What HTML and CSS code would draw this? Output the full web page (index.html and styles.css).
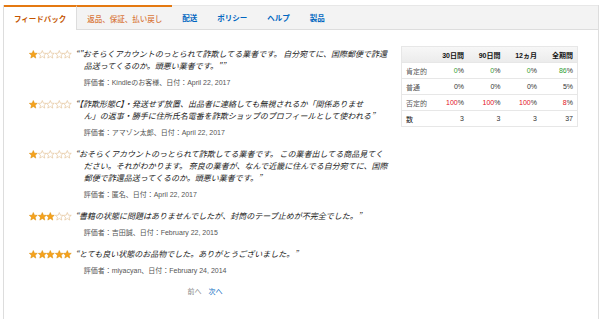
FILE: index.html
```html
<!DOCTYPE html>
<html lang="ja">
<head>
    <meta charset="UTF-8">
    <title>フィードバック</title>
    <link rel="stylesheet" href="styles.css">
</head>
<body>
    <div class="panel">
        <div class="tabs">
            <div class="tab active">フィードバック</div>
            <div class="tab hover">返品、保証、払い戻し</div>
            <div class="tab">配送</div>
            <div class="tab">ポリシー</div>
            <div class="tab">ヘルプ</div>
            <div class="tab">製品</div>
        </div>

        <div class="content">
            <div class="reviews">
                <div class="review">
                    <div class="stars" data-rating="1"></div>
                    <div class="review-body">
                        <p class="review-text">“"おそらくアカウントのっとられて詐欺してる業者です。 自分宛てに、国際郵便で詐還品送ってくるのか。頭悪い業者です。"”</p>
                        <p class="review-meta">評価者：Kindleのお客様、日付：April 22, 2017</p>
                    </div>
                </div>

                <div class="review">
                    <div class="stars" data-rating="1"></div>
                    <div class="review-body">
                        <p class="review-text">“【詐欺形態C】・発送せず放置、出品者に連絡しても無視されるか「関係ありませ<br>ん」の返事・勝手に住所氏名電番を詐欺ショップのプロフィールとして使われる”</p>
                        <p class="review-meta">評価者：アマゾン太郎、日付：April 22, 2017</p>
                    </div>
                </div>

                <div class="review">
                    <div class="stars" data-rating="1"></div>
                    <div class="review-body">
                        <p class="review-text">“おそらくアカウントのっとられて詐欺してる業者です。 この業者出してる商品見てく<br>ださい。それがわかります。 奈良の業者が、なんで近畿に住んでる自分宛てに、国際<br>郵便で詐還品送ってくるのか。頭悪い業者です。”</p>
                        <p class="review-meta">評価者：匿名、日付：April 22, 2017</p>
                    </div>
                </div>

                <div class="review">
                    <div class="stars" data-rating="3"></div>
                    <div class="review-body">
                        <p class="review-text">“書籍の状態に問題はありませんでしたが、封筒のテープ止めが不完全でした。”</p>
                        <p class="review-meta">評価者：吉田誠、日付：February 22, 2015</p>
                    </div>
                </div>

                <div class="review">
                    <div class="stars" data-rating="5"></div>
                    <div class="review-body">
                        <p class="review-text">“とても良い状態のお品物でした。ありがとうございました。”</p>
                        <p class="review-meta">評価者：miyacyan、日付：February 24, 2014</p>
                    </div>
                </div>

                <div class="pager">
                    <span class="pager-prev">前へ</span>
                    <a href="#" class="pager-next">次へ</a>
                </div>
            </div>

            <table class="summary">
                <thead>
                    <tr>
                        <th></th>
                        <th>30日間</th>
                        <th>90日間</th>
                        <th>12ヵ月</th>
                        <th>全期間</th>
                    </tr>
                </thead>
                <tbody>
                    <tr>
                        <td>肯定的</td>
                        <td><span class="pos">0</span>%</td>
                        <td><span class="pos">0</span>%</td>
                        <td><span class="pos">0</span>%</td>
                        <td><span class="pos">86</span>%</td>
                    </tr>
                    <tr>
                        <td>普通</td>
                        <td>0%</td>
                        <td>0%</td>
                        <td>0%</td>
                        <td>5%</td>
                    </tr>
                    <tr>
                        <td>否定的</td>
                        <td><span class="neg">100</span>%</td>
                        <td><span class="neg">100</span>%</td>
                        <td><span class="neg">100</span>%</td>
                        <td><span class="neg">8</span>%</td>
                    </tr>
                    <tr>
                        <td>数</td>
                        <td>3</td>
                        <td>3</td>
                        <td>3</td>
                        <td>37</td>
                    </tr>
                </tbody>
            </table>
        </div>
    </div>

    <script>
        // draw the star rows from data-rating
        const STAR = 'M5 0.6 L6.3 3.7 L9.6 3.9 L7.1 6.1 L7.9 9.4 L5 7.6 L2.1 9.4 L2.9 6.1 L0.4 3.9 L3.7 3.7 Z';

        document.querySelectorAll('.stars').forEach(el => {
            const rating = parseInt(el.dataset.rating, 10);
            let html = '';
            for (let i = 0; i < 5; i++) {
                const cls = i < rating ? 'star full' : 'star empty';
                html += `<svg class="${cls}" viewBox="0 0 10 10"><path d="${STAR}"/></svg>`;
            }
            el.innerHTML = html;
        });
    </script>
</body>
</html>
```

FILE: styles.css
```css
* {
    margin: 0;
    padding: 0;
    box-sizing: border-box;
}

:root {
    --border-color: #dddddd;
    --link-color: #0066c0;
    --orange: #e47911;
    --text-color: #111111;
    --muted-color: #555555;
}

body {
    background: #ffffff;
    font-family: "Liberation Sans", "Noto Sans CJK JP", sans-serif;
    color: var(--text-color);
}

.panel {
    margin: 5px 1px 0 3px;
    min-height: 314px;
    border-left: 1px solid var(--border-color);
    border-right: 1px solid var(--border-color);
}

/* tabs */

.tabs {
    display: flex;
    align-items: flex-start;
    height: 25px;
    background: #f3f3f3;
    border-top: 1px solid #e7e7e7;
    border-bottom: 1px solid var(--border-color);
}

.tab {
    height: 24px;
    margin-top: -1px;
    padding: 0 10px;
    display: flex;
    align-items: center;
    font-family: "Noto Sans CJK JP", sans-serif;
    font-size: 7.5px;
    font-weight: 700;
    color: var(--link-color);
    border-top: 1px solid #e7e7e7;
}

.tab.active {
    height: 25px;
    background: #ffffff;
    color: #c45500;
    border-top: 2px solid var(--orange);
}

.tab.hover {
    color: #d9783c;
    border-top: 2px solid var(--orange);
    border-left: 1px solid var(--border-color);
    font-weight: 500;
}

/* content */

.content {
    display: flex;
    align-items: flex-start;
    padding: 16px 20px 0 25px;
}

.reviews {
    width: 364px;
    padding-top: 2px;
}

.review {
    display: flex;
    align-items: flex-start;
    margin-bottom: 10px;
}

.stars {
    display: flex;
    width: 54px;
    padding-top: 2px;
}

.star {
    width: 8.6px;
    height: 8.6px;
}

.star.full path {
    fill: #f7a21b;
    stroke: #d98a00;
    stroke-width: 0.6;
}

.star.empty path {
    fill: #ffffff;
    stroke: #dcb27a;
    stroke-width: 0.6;
}

.review-body {
    width: 312px;
    padding-left: 1px;
}

.review-text {
    font-family: "Noto Sans CJK JP", serif;
    font-style: italic;
    font-size: 8px;
    line-height: 12px;
    color: #222222;
    text-indent: -8.5px;
}

.review-meta {
    margin-top: 6px;
    font-size: 7px;
    line-height: 10px;
    color: var(--muted-color);
}

.pager {
    display: flex;
    justify-content: center;
    gap: 7px;
    margin-top: 10px;
    padding-right: 12px;
    font-family: "Noto Sans CJK JP", sans-serif;
    font-size: 7px;
    line-height: 10px;
}

.pager-prev {
    color: #888888;
}

.pager-next {
    color: var(--link-color);
    text-decoration: none;
}

/* summary table */

.summary {
    margin-left: 8px;
    width: 177px;
    table-layout: fixed;
    border-collapse: collapse;
    border: 1px solid #e7e7e7;
    font-size: 7px;
    color: #333333;
}

.summary th,
.summary td {
    height: 16px;
    padding: 0 4px;
    text-align: right;
    border-bottom: 1px solid #e7e7e7;
}

.summary th:first-child,
.summary td:first-child {
    width: 30px;
    text-align: left;
    color: var(--muted-color);
}

.summary thead tr {
    background: linear-gradient(#f7f7f7, #ebebeb);
}

.summary th {
    font-weight: 700;
    color: #111111;
}

.summary td:first-child {
    font-family: "Noto Sans CJK JP", sans-serif;
}

.summary tr:last-child td:first-child {
    color: #111111;
}

.pos {
    color: #2f9e2f;
}

.neg {
    color: #e3101b;
}
```
